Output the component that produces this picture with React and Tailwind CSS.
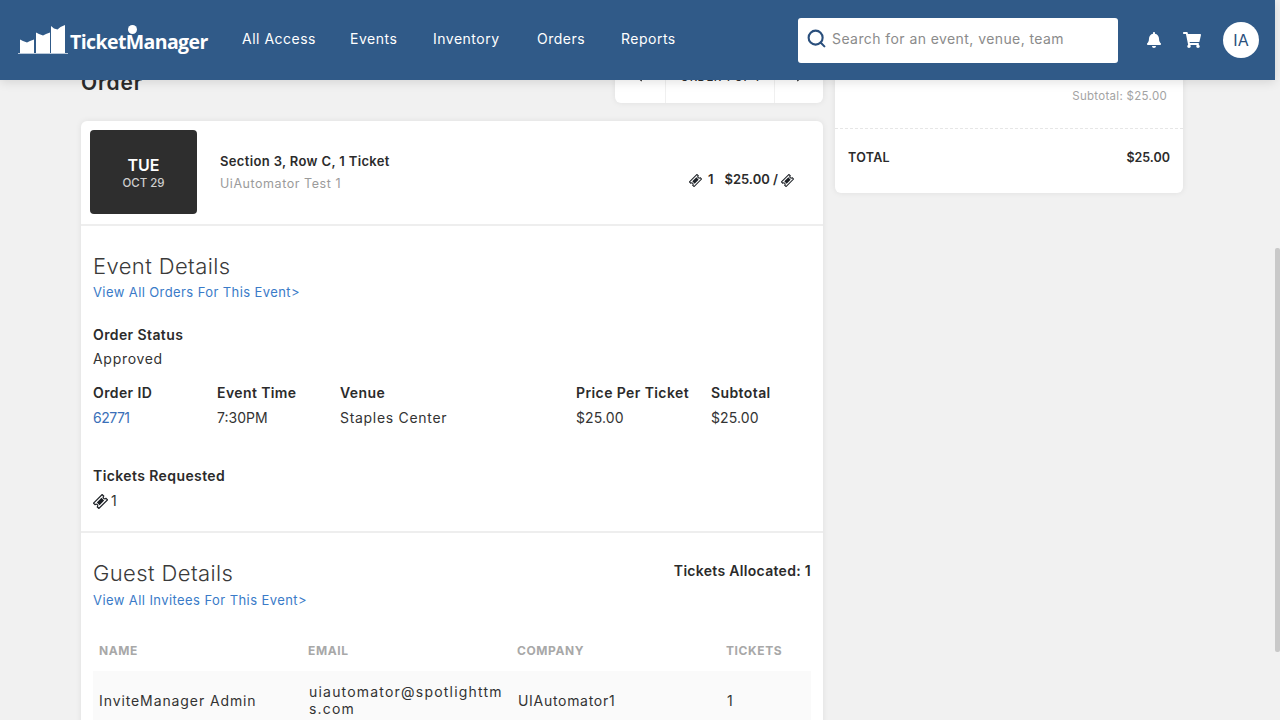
import React from 'react';
import { Search } from 'lucide-react';
import { FaBell, FaShoppingCart, FaChevronLeft, FaChevronRight } from 'react-icons/fa';

const TicketIcon = ({ className }) => (
  <svg viewBox="0 0 16 16" className={className}>
    <g transform="rotate(-45 8 8)">
      <path
        d="M1.500 4h13v2.300a1.700 1.700 0 0 0 0 3.400V12h-13V9.700a1.700 1.700 0 0 0 0-3.400z"
        fill="#fff"
        stroke="#1b1f24"
        strokeWidth="1.300"
      />
      <rect x="4.500" y="6" width="7" height="4" fill="#1b1f24" />
    </g>
  </svg>
);

const Logo = () => (
  <div className="flex items-end h-[34px] w-[192px] mb-[4px] relative">
    <svg viewBox="0 0 52 30" className="w-[52px] h-[30px] shrink-0">
      <path
        d="M2 14.500l3 1.500 4 1.500 3-1.500 4-1.500V28H2zM18 7.500l3 1.500 4 1.500 3-1.500 4-1.500V28H18zM33 1l3 2.500 3.500 1 3-2.500 4.500-2v28H33z"
        fill="#fff"
      />
      <path d="M0 28.500h50" stroke="#dfe7f0" strokeWidth="0.8" />
    </svg>
    <span className="font-['Open_Sans',sans-serif] font-bold text-white text-[19.5px] leading-none tracking-[-0.6px] mb-[4px]">
      TicketManager
    </span>
    <span className="absolute left-[110px] top-[4px] w-[9px] h-[9px] rounded-full bg-white" />
  </div>
);

const NAV = ['All Access', 'Events', 'Inventory', 'Orders', 'Reports'];

const Header = () => (
  <header className="absolute top-0 left-0 right-[5px] h-[80px] bg-[#305a88] flex items-center pl-[18px] shadow-[0_2px_10px_rgba(0,0,0,0.12)] z-10">
    <Logo />
    <nav className="grid grid-cols-[108px_83px_104px_84px_70px] ml-[32px] pb-[3px] text-white text-[14px] tracking-[0.5px]">
      {NAV.map(n => (
        <span key={n}>{n}</span>
      ))}
    </nav>
    <div className="ml-auto flex items-center pr-[16px]">
      <div className="w-[320px] h-[45px] bg-white rounded-[3px] flex items-center pl-[8px] gap-[5px]">
        <Search className="w-[21px] h-[21px] text-[#2a4f7c] mb-[3px]" strokeWidth={2.4} />
        <span className="text-[14px] text-[#8b8b8b] tracking-[0.42px] pb-[3px]">Search for an event, venue, team</span>
      </div>
      <FaBell className="w-[16px] h-[16px] text-white ml-[28px]" />
      <FaShoppingCart className="w-[18px] h-[16px] text-white ml-[21px]" />
      <div className="w-[36px] h-[36px] rounded-full bg-white text-[#2a4f7c] text-[16px] flex items-center justify-center ml-[22px]">
        IA
      </div>
    </div>
  </header>
);

const Field = ({ label, gap = 'mt-[5px]', children }) => (
  <div>
    <div className="text-[14px] font-semibold text-[#2b2b2b] leading-[20px] tracking-[0.4px]">{label}</div>
    <div className={`text-[14px] text-[#333] leading-[20px] ${gap} tracking-[0.7px]`}>{children}</div>
  </div>
);

const OrderCard = () => (
  <div className="bg-white rounded-[6px] shadow-[0_0_6px_rgba(0,0,0,0.08)] mt-[18px]">
    <div className="flex items-center h-[105px] pl-[9px] pr-[29px] border-b-2 border-[#eeeeee]">
      <div className="w-[107px] h-[84px] mb-[1px] bg-[#2e2e2e] rounded-[4px] flex flex-col items-center justify-center text-white">
        <div className="text-[16px] font-semibold leading-[20px] mt-[2px]">TUE</div>
        <div className="text-[11.5px] font-medium text-[#cfcfcf] leading-[16px]">OCT 29</div>
      </div>
      <div className="ml-[23px]">
        <div className="text-[13px] font-semibold text-[#2b2b2b] leading-[20px] tracking-[0.35px]">Section 3, Row C, 1 Ticket</div>
        <div className="text-[12.5px] text-[#9b9b9b] leading-[20px] mt-[3px] tracking-[0.55px]">UiAutomator Test 1</div>
      </div>
      <div className="ml-auto flex items-center text-[13px] font-semibold text-[#2b2b2b] mt-[15px]">
        <TicketIcon className="w-[13px] h-[13px]" />
        <span className="ml-[6px]">1</span>
        <span className="ml-[11px]">$25.00 /</span>
        <TicketIcon className="w-[13px] h-[13px] ml-[3px]" />
      </div>
    </div>

    <section className="px-[12px] border-b-2 border-[#eeeeee] h-[307px] pt-[26px]">
      <h2 className="text-[22px] font-light text-[#3a3a3a] leading-[28px] tracking-[0.4px]">Event Details</h2>
      <div className="text-[13px] text-[#3a7bc8] leading-[20px] mt-[2px] tracking-[0.4px]">View All Orders For This Event&gt;</div>
      <div className="mt-[23px]">
        <Field label="Order Status" gap="mt-[4px]">Approved</Field>
      </div>
      <div className="grid grid-cols-[124px_123px_236px_135px_1fr] mt-[14px]">
        <Field label="Order ID"><span className="text-[#3a6fb8] tracking-[-0.5px]">62771</span></Field>
        <Field label="Event Time"><span className="tracking-[0px]">7:30PM</span></Field>
        <Field label="Venue">Staples Center</Field>
        <Field label="Price Per Ticket"><span className="tracking-[0.1px]">$25.00</span></Field>
        <Field label="Subtotal"><span className="tracking-[0.1px]">$25.00</span></Field>
      </div>
      <div className="mt-[38px]">
        <Field label="Tickets Requested">
          <span className="flex items-center gap-[3px]">
            <TicketIcon className="w-[15px] h-[15px]" />1
          </span>
        </Field>
      </div>
    </section>

    <section className="px-[12px] pt-[26px] pb-[30px]">
      <div className="flex justify-between">
        <h2 className="text-[22px] font-light text-[#3a3a3a] leading-[28px] tracking-[0.4px]">Guest Details</h2>
        <div className="text-[14px] font-semibold text-[#2b2b2b] leading-[20px] tracking-[0.3px] mt-[2px]">Tickets Allocated: 1</div>
      </div>
      <div className="text-[13px] text-[#3a7bc8] leading-[20px] mt-[3px] tracking-[0.42px]">View All Invitees For This Event&gt;</div>
      <div className="grid grid-cols-[209px_209px_209px_91px] mt-[32px] text-[12px] font-bold text-[#a8a8a8] tracking-[0.6px] h-[29px] pl-[6px]">
        <div>NAME</div>
        <div>EMAIL</div>
        <div>COMPANY</div>
        <div>TICKETS</div>
      </div>
      <div className="grid grid-cols-[209px_209px_209px_91px] items-center bg-[#fafafa] h-[60px] pl-[6px] pb-[2px] text-[14px] text-[#333]">
        <div className="tracking-[0.9px]">InviteManager Admin</div>
        <div className="leading-[17px] tracking-[1.2px] pl-[1px]">uiautomator@spotlighttm<br />s.com</div>
        <div className="tracking-[0.7px] pl-[1px]">UIAutomator1</div>
        <div className="pl-[1px]">1</div>
      </div>
    </section>
  </div>
);

const App = () => (
  <div className="relative h-[720px] w-[1280px] overflow-hidden flex bg-[#f1f1f1] font-['Inter',sans-serif]">
    <Header />
    <main className="flex-1 flex items-start pl-[81px] gap-[12px] pt-[53px]">
      <div className="w-[742px]">
        <div className="flex items-end justify-between">
          <h1 className="text-[21px] font-semibold text-[#2b2b2b] leading-[28px] mb-[6px] tracking-[0.8px]">Order</h1>
          <div className="flex w-[208px] h-[50px] bg-white rounded-[6px] shadow-[0_0_6px_rgba(0,0,0,0.08)] text-[#2b2b2b]">
            <div className="w-[51px] flex items-center justify-center border-r border-[#f0f0f0]">
              <FaChevronLeft className="w-[8px] h-[8px]" />
            </div>
            <div className="flex-1 flex items-center justify-center text-[11.5px] font-medium tracking-[0.5px] border-r border-[#f0f0f0]">
              ORDER 1 OF 1
            </div>
            <div className="w-[48px] flex items-center justify-center">
              <FaChevronRight className="w-[8px] h-[8px]" />
            </div>
          </div>
        </div>
        <OrderCard />
      </div>
      <aside className="w-[348px] bg-white rounded-[6px] shadow-[0_0_6px_rgba(0,0,0,0.08)] -mt-[10px]">
        <div className="h-[86px] border-b border-dashed border-[#e6e6e6] flex items-end justify-end pr-[16px] pb-[23px] text-[11.5px] text-[#a3a3a3] tracking-[0.3px]">
          <span>Subtotal: $25.00</span>
        </div>
        <div className="h-[64px] flex items-center justify-between pl-[13px] pr-[13px] pb-[6px] text-[12.5px] font-semibold text-[#2b2b2b]">
          <span className="tracking-[0.3px]">TOTAL</span>
          <span>$25.00</span>
        </div>
      </aside>
    </main>
    <div className="w-[5px] h-full bg-[#f1f1f1] shrink-0 pt-[248px]">
      <div className="w-full h-[404px] bg-[#c9c9c9] rounded-[2px]" />
    </div>
  </div>
);

export default App;
